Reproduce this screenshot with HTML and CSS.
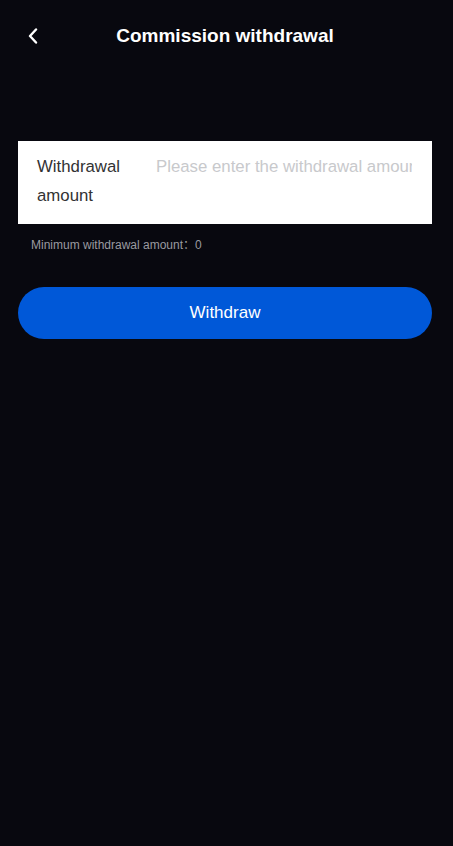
FILE: index.html
```html
<!DOCTYPE html>
<html>
<head>
<meta charset="utf-8">
<link rel="stylesheet" href="styles.css">
</head>
<body>
<div class="page">
  <header class="nav">
    <span class="back">
      <svg width="10" height="16" viewBox="0 0 10 16"><path d="M8 1.5 L2 8 L8 14.5" fill="none" stroke="#fff" stroke-width="2.4" stroke-linecap="round" stroke-linejoin="round"/></svg>
    </span>
    <h1 class="title">Commission withdrawal</h1>
  </header>
  <div class="field">
    <label class="label">Withdrawal amount</label>
    <input class="input" type="text" placeholder="Please enter the withdrawal amount">
  </div>
  <p class="hint">Minimum withdrawal amount：0</p>
  <button class="btn">Withdraw</button>
</div>
</body>
</html>
```
FILE: styles.css
```css
html, body {
  margin: 0;
  padding: 0;
  background: #08080f;
  font-family: "Liberation Sans", "Noto Sans CJK SC", Arial, sans-serif;
}
.page {
  width: 450px;
  min-height: 846px;
}
.nav {
  position: relative;
  height: 70px;
  display: flex;
  align-items: center;
  justify-content: center;
}
.back {
  position: absolute;
  left: 28px;
  top: 28px;
  width: 10px;
  height: 16px;
  display: flex;
}
.title {
  margin: 0;
  color: #fff;
  font-size: 19px;
  font-weight: bold;
  line-height: 1;
}
.field {
  margin: 71px 18px 0;
  background: #fff;
  display: flex;
  align-items: flex-start;
  padding: 12px 20px 13px 19px;
}
.label {
  width: 107px;
  margin-right: 12px;
  flex: none;
  color: #323233;
  font-size: 16.8px;
  line-height: 28.8px;
}
.input {
  flex: 1;
  min-width: 0;
  border: 0;
  outline: 0;
  padding: 0;
  margin: 0;
  font-family: inherit;
  font-size: 16.8px;
  line-height: 28.8px;
  height: 28.8px;
  color: #323233;
  background: transparent;
}
.input::placeholder {
  color: #c8c9cc;
}
.hint {
  margin: 13px 0 0 31px;
  font-size: 12px;
  line-height: 16px;
  color: #9a9aa0;
}
.btn {
  display: block;
  margin: 34px 18px 0;
  width: 414px;
  height: 52px;
  border: 0;
  border-radius: 26px;
  background: #0058d8;
  color: #fff;
  font-family: inherit;
  font-size: 17px;
  padding: 0;
}
```
